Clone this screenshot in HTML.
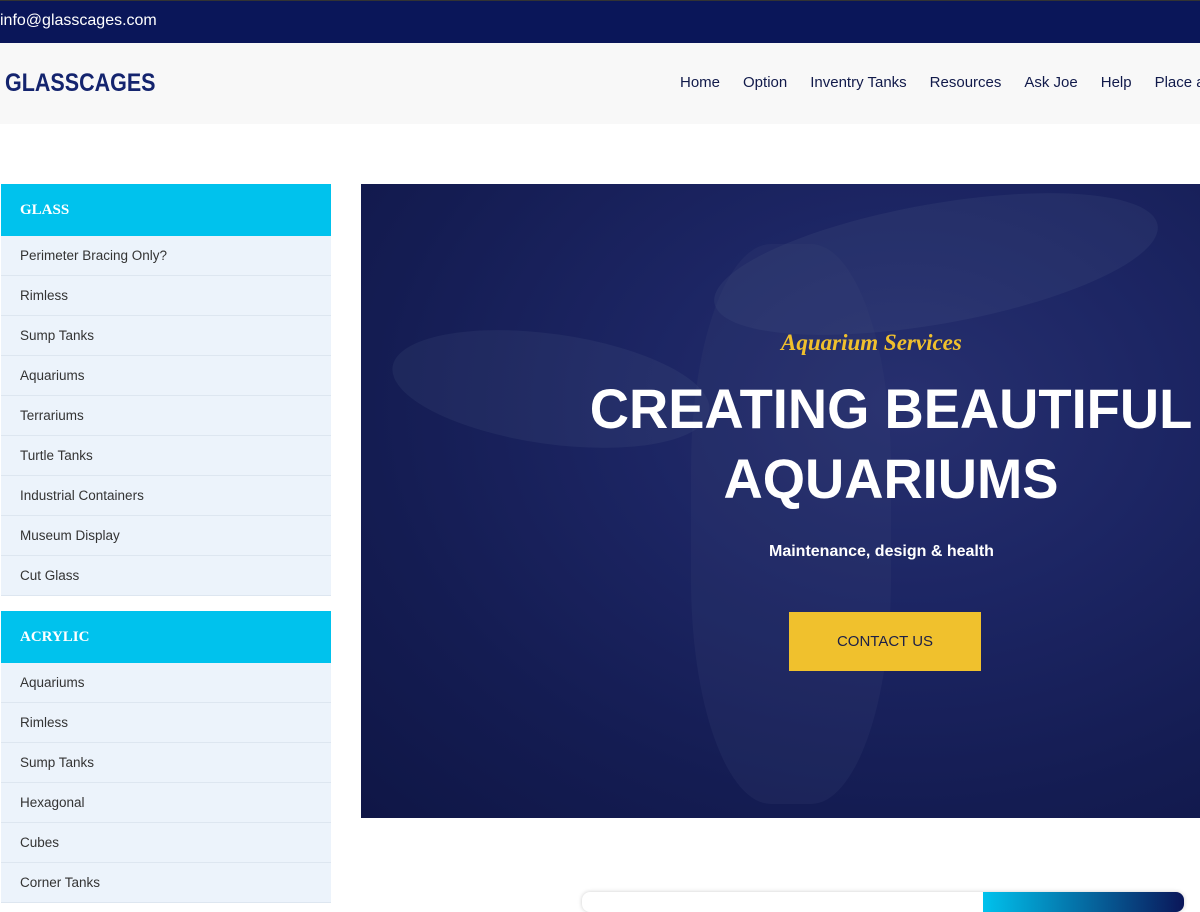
<!DOCTYPE html>
<html><head><style>
*{margin:0;padding:0;box-sizing:border-box}
body{width:1200px;height:899px;overflow:hidden;background:#fff;font-family:"Liberation Sans",sans-serif;position:relative}
.top{position:absolute;left:0;top:0;width:1200px;height:43px;background:#0a1659;border-top:1px solid #333}
.top span{position:absolute;left:0;top:11px;color:#fff;font-size:16px}
.nav{position:absolute;top:43px;left:0;width:1200px;height:81px;background:#f8f8f8}
.logo{position:absolute;left:5px;top:26px;font-size:25px;font-weight:bold;color:#14246e;transform:scaleX(0.86);transform-origin:left}
.menu{position:absolute;top:31px;left:680px;white-space:nowrap;font-size:15px;color:#111a4a}
.menu span{margin-right:23px}
.side{position:absolute;left:1px;width:330px}
.hd{height:52px;background:#00c2ed;color:#fff;font-weight:bold;font-size:15px;padding:18px 19px;font-family:"Liberation Serif",serif}
.it{height:40px;background:#ecf3fb;border-bottom:1px solid #dde6f0;font-size:13.5px;color:#333;padding:12px 19px}
.hero{position:absolute;left:361px;top:184px;width:839px;height:634px;background:radial-gradient(ellipse at 65% 35%,#27306f 0%,#1c2563 35%,#141c52 70%,#0f1646 100%);overflow:hidden}
.hero .f{position:absolute;border-radius:50%;background:rgba(120,140,170,0.10)}
.sub{position:absolute;left:420px;top:146px;color:#f0c02d;font-style:italic;font-weight:bold;font-size:23px;font-family:"Liberation Serif",serif}
.h1{position:absolute;left:210px;top:190px;width:640px;text-align:center;color:#fff;font-weight:bold;font-size:56px;line-height:70px;transform:scaleX(0.97)}
.p{position:absolute;left:408px;top:359px;color:#fff;font-weight:bold;font-size:16px}
.btn{position:absolute;left:428px;top:428px;width:192px;height:59px;background:#f0c12d;color:#1b1f48;font-size:15px;text-align:center;line-height:59px}
.card{position:absolute;left:582px;top:892px;width:602px;height:20px;border-radius:8px;box-shadow:0 0 4px #ccc;background:#fff;overflow:hidden}
.card div{position:absolute;left:401px;top:0;width:201px;height:20px;background:linear-gradient(90deg,#00c2ed,#0a1659)}
</style></head><body>
<div class="top"><span>info@glasscages.com</span></div>
<div class="nav"><div class="logo">GLASSCAGES</div>
<div class="menu"><span>Home</span><span>Option</span><span>Inventry Tanks</span><span>Resources</span><span>Ask Joe</span><span>Help</span><span>Place a</span></div></div>
<div class="side" style="top:184px">
<div class="hd">GLASS</div>
<div class="it">Perimeter Bracing Only?</div><div class="it">Rimless</div><div class="it">Sump Tanks</div><div class="it">Aquariums</div><div class="it">Terrariums</div><div class="it">Turtle Tanks</div><div class="it">Industrial Containers</div><div class="it">Museum Display</div><div class="it">Cut Glass</div>
</div>
<div class="side" style="top:611px">
<div class="hd">ACRYLIC</div>
<div class="it">Aquariums</div><div class="it">Rimless</div><div class="it">Sump Tanks</div><div class="it">Hexagonal</div><div class="it">Cubes</div><div class="it">Corner Tanks</div>
</div>
<div class="hero">
<div class="f" style="left:30px;top:150px;width:320px;height:110px;transform:rotate(8deg)"></div>
<div class="f" style="left:350px;top:20px;width:450px;height:120px;transform:rotate(-10deg)"></div>
<div class="f" style="left:330px;top:60px;width:200px;height:560px;border-radius:40%;background:rgba(60,70,120,0.2)"></div>
<div class="sub">Aquarium Services</div>
<div class="h1">CREATING BEAUTIFUL<br>AQUARIUMS</div>
<div class="p">Maintenance, design &amp; health</div>
<div class="btn">CONTACT US</div>
</div>
<div class="card"><div></div></div>
</body></html>
